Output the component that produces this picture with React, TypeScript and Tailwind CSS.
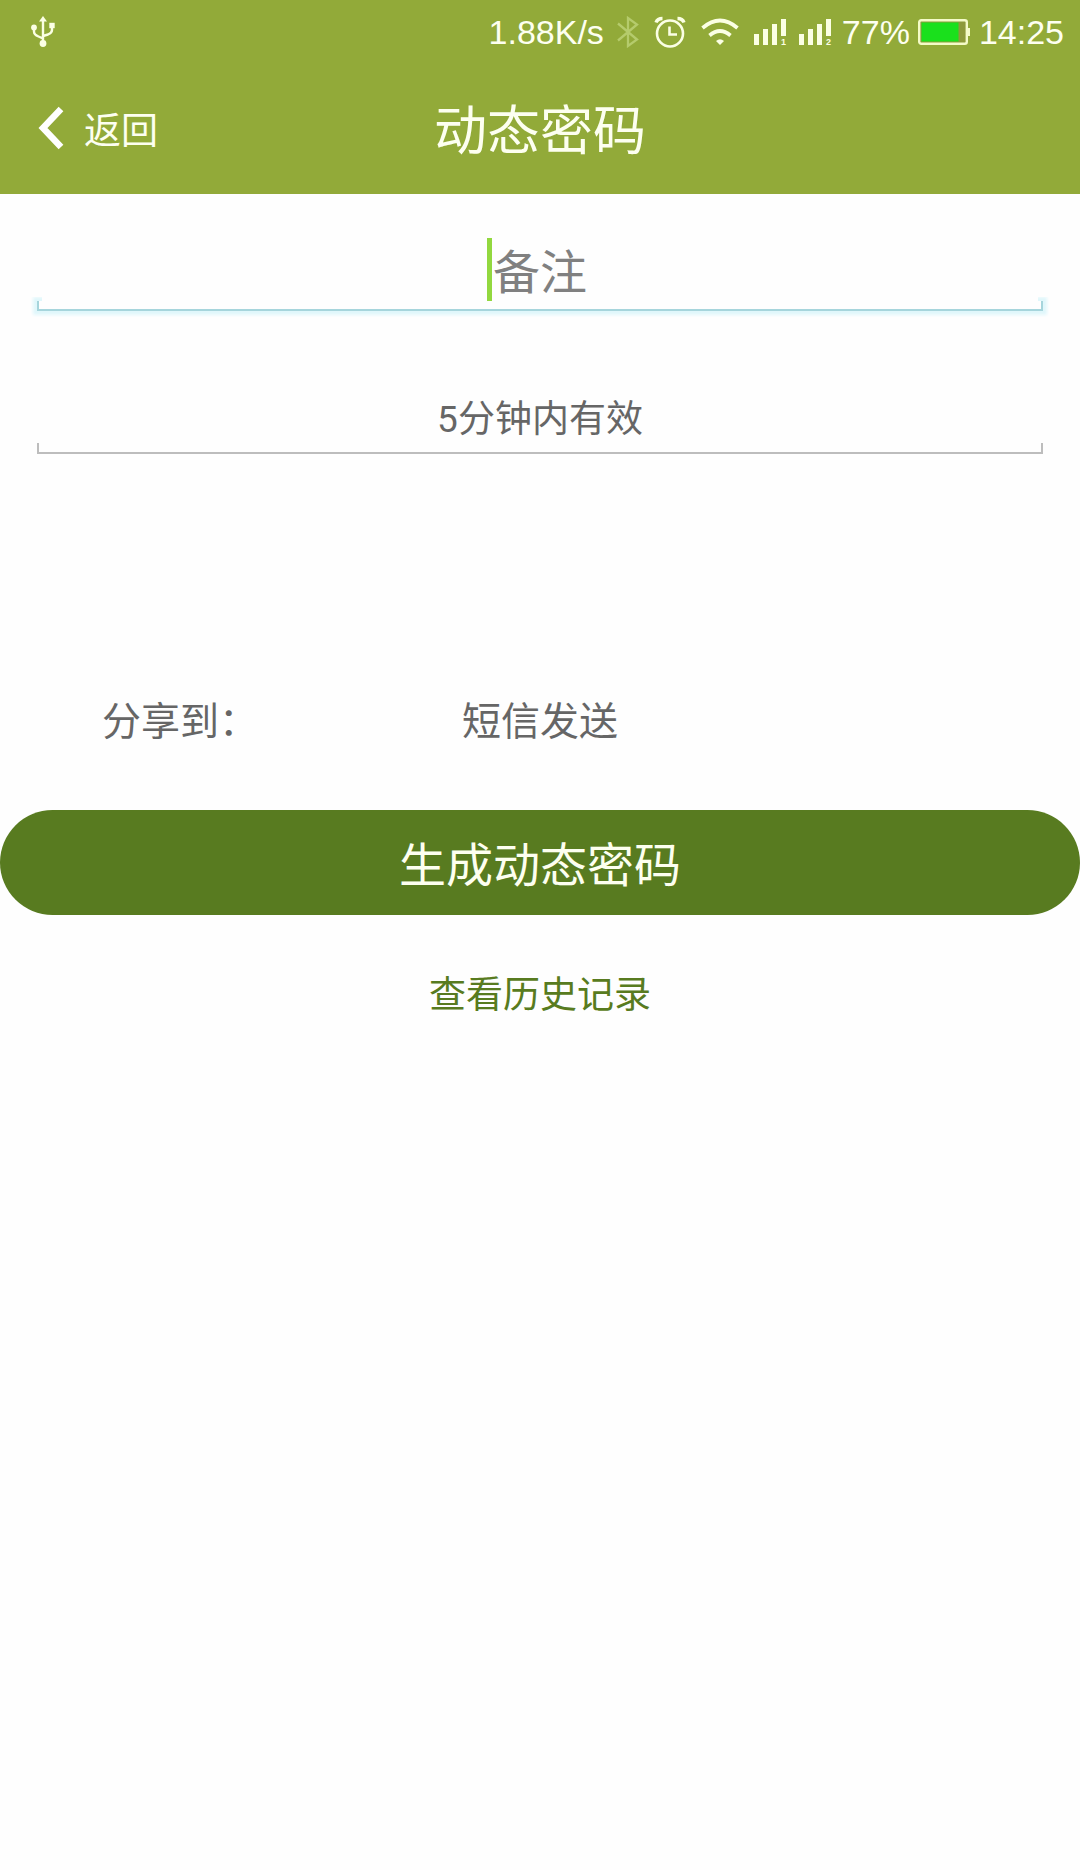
const UsbIcon = () => (
  <svg width="26" height="32" viewBox="0 0 26 32" fill="none" stroke="#fbffe4" strokeWidth="2.400">
    <path d="M13 4v24M4 12v3.500c0 3 2 4 4.500 5L13 22.500M22 11v3c0 2.500-1.500 3.500-4 4.500L13 20" />
    <path d="M13 0l4 5.500H9z" fill="#fbffe4" stroke="none" />
    <circle cx="13" cy="27.500" r="3.400" fill="#fbffe4" stroke="none" />
    <circle cx="4" cy="11.500" r="2.900" fill="#fbffe4" stroke="none" />
    <path d="M19.300 6.800h5.400v5.400h-5.400z" fill="#fbffe4" stroke="none" />
  </svg>
);

const BluetoothIcon = () => (
  <svg width="24" height="32" viewBox="0 0 24 32" fill="none" stroke="#b5cb6c" strokeWidth="2.300">
    <path d="M2 7.500l19 16-9 6.500V2l9 6.500-19 16" />
  </svg>
);

const AlarmIcon = () => (
  <svg width="32" height="32" viewBox="0 0 32 32" fill="none" stroke="#fbffe4" strokeWidth="2.600">
    <circle cx="16" cy="17.500" r="13" />
    <path d="M15.500 10.500v8h7.500" />
    <path d="M2 6.500q1.500-4 6.500-4M30 6.500q-1.500-4-6.500-4" strokeWidth="3.400" />
  </svg>
);

const WifiIcon = () => (
  <svg width="38" height="28" viewBox="0 0 38 28" fill="none" stroke="#fbffe4" strokeWidth="3.700">
    <path d="M1.500 10Q19-5 36.500 10M8.500 17.500q10.500-9 21 0" />
    <path d="M15 23q4-3.500 8 0l-4 4z" fill="#fbffe4" stroke="none" />
  </svg>
);

const SignalIcon = ({ sim }: { sim: number }) => (
  <svg width="34" height="28" viewBox="0 0 34 28" fill="#fbffe4">
    <path d="M0 16h5v11H0zM9 11h5v16H9zM18 6h5v21h-5zM27 1h5v17h-5z" />
    <text x="27" y="27" fontSize="9" fontWeight="700" fontFamily="Liberation Sans, sans-serif">
      {sim}
    </text>
  </svg>
);

const BatteryIcon = () => (
  <svg width="53" height="28" viewBox="0 0 53 28">
    <rect x="1.200" y="2.200" width="47.600" height="23.600" rx="2" fill="#8d9a3a" stroke="#f4fbc8" strokeWidth="2.400" />
    <rect x="3.500" y="4.500" width="37" height="19" fill="#1ae01c" />
    <path d="M49 10h3v8h-3z" fill="#f4fbc8" />
  </svg>
);

const StatusBar = () => (
  <div className="flex h-16 items-center pl-[30px] pr-[16px] font-['Liberation_Sans',sans-serif] text-[34px] leading-none">
    <UsbIcon />
    <span className="ml-auto">1.88K/s</span>
    <div className="ml-[12px]"><BluetoothIcon /></div>
    <div className="ml-[14px]"><AlarmIcon /></div>
    <div className="ml-[15px]"><WifiIcon /></div>
    <div className="ml-[15px]"><SignalIcon sim={1} /></div>
    <div className="ml-[11px]"><SignalIcon sim={2} /></div>
    <span className="ml-[9px]">77%</span>
    <div className="ml-[8px]"><BatteryIcon /></div>
    <span className="ml-[8px]">14:25</span>
  </div>
);

const TitleBar = () => (
  <div className="grid h-[130px] grid-cols-3 items-center">
    <button className="flex items-center pl-[38px] text-[37px] leading-none">
      <svg className="mb-[2px]" width="28" height="44" viewBox="0 0 28 44" fill="none" stroke="#fff" strokeWidth="6.500">
        <path d="M23 3L5 22l18 19" />
      </svg>
      <span className="ml-[18px] pt-[4px]">返回</span>
    </button>
    <h1 className="pt-[7px] text-center text-[53px] leading-none">动态密码</h1>
  </div>
);

export default function App() {
  return (
    <div className="h-[1870px] w-[1080px] bg-[#fefefe] font-[Roboto,'Noto_Sans_CJK_SC',sans-serif] text-[#666]">
      <header className="h-[194px] bg-[#92aa39] text-[#fdfff0]">
        <StatusBar />
        <TitleBar />
      </header>

      <main className="flex flex-col">
        <div className="mx-[37px] mt-[44px] h-[74px]">
          <div className="flex h-[63px] items-center justify-center text-[47px] leading-none text-[#808080]">
            <span className="mr-px h-[63px] w-[5px] bg-[#92d83f]" />
            <span className="mr-[6px] pt-[6px]">备注</span>
          </div>
          <div className="h-[10px] border-2 border-t-0 border-[#a6d5dc] shadow-[0_0_3px_4px_#e0f7fb] [clip-path:polygon(-6px_-4px,5px_-4px,5px_3px,1001px_3px,1001px_-4px,1012px_-4px,1012px_16px,-6px_16px)]" />
        </div>

        <div className="mx-[37px] mt-[80px]">
          <div className="flex h-[51px] items-center justify-center pt-[4px] text-[37px] leading-none">5分钟内有效</div>
          <div className="h-[11px] border-2 border-t-0 border-[#bdbdbd]" />
        </div>

        <div className="mt-[240px] grid h-[52px] grid-cols-3 items-center pt-[4px] text-center text-[39px] leading-none">
          <span>分享到：</span>
          <span>短信发送</span>
        </div>

        <button className="mt-[64px] h-[105px] w-full rounded-full bg-[#587b20] pt-[6px] text-[47px] leading-none text-[#fdfff0]">
          生成动态密码
        </button>
        <a className="mt-[59px] self-center text-[37px] leading-[44px] text-[#587b20]">查看历史记录</a>
      </main>
    </div>
  );
}
